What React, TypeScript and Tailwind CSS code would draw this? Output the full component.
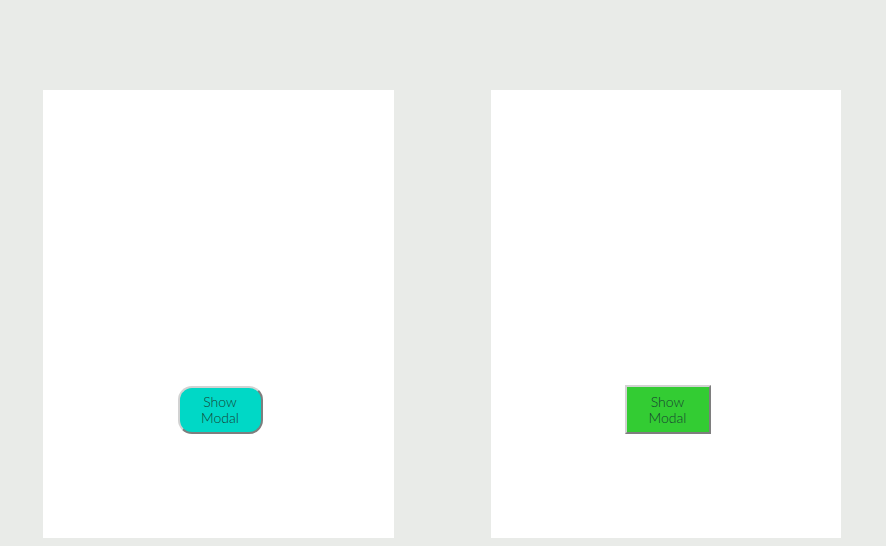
import React from 'react';

function Panel({ rounded, color, width }: { rounded: boolean; color: string; width: string }) {
  return (
    <div className={'h-[448px] bg-white flex flex-col items-center pt-[296px] ' + width}>
      <button
        className={
          'h-[48px] border-2 border-[#d2d2d2] text-[#173d32] text-[14px] leading-[16px] font-light ' +
          (rounded ? 'w-[85px] rounded-[14px] ml-[3px] ' : 'w-[86px] rounded-none ml-[3px] -mt-[1px] h-[49px] ') +
          color
        }
        style={{ fontFamily: 'Lato, "Open Sans", sans-serif', borderStyle: 'outset' }}
      >
        Show
        <br />
        Modal
      </button>
    </div>
  );
}

export default function App() {
  return (
    <div className="w-[886px] h-[546px] bg-[#e9ebe8] flex gap-[97px] pl-[43px] pt-[90px] overflow-hidden">
      <Panel rounded color="bg-[#00d8c6]" width="w-[351px]" />
      <Panel rounded={false} color="bg-[#33cc33]" width="w-[350px]" />
    </div>
  );
}
